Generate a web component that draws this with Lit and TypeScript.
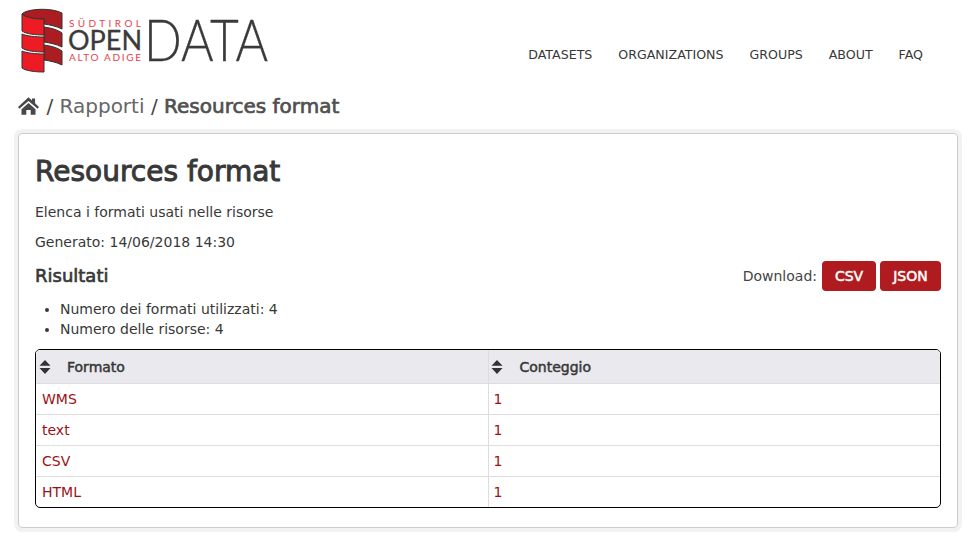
import {LitElement, html, css} from "lit";
import {customElement} from "lit/decorators.js";

const NAV = ["DATASETS", "ORGANIZATIONS", "GROUPS", "ABOUT", "FAQ"];
const ROWS = ["WMS", "text", "CSV", "HTML"];

const sortIcon = html`
  <svg class="sort" viewBox="0 0 12 14" width="12" height="14">
    <path d="M6 0 L11.5 5.8 H0.5 Z M0.5 8 H11.5 L6 14 Z" fill="#333"></path>
  </svg>
`;

@customElement("app-root")
export class AppRoot extends LitElement {
  static styles = css`
    :host {
      display: block;
      width: 979px;
      height: 547px;
      overflow: hidden;
      background: #fff;
      color: #383838;
      font-family: "DejaVu Sans", sans-serif;
      font-size: 14px;
      line-height: 20px;
    }
    header {
      height: 82px;
      display: flex;
      justify-content: space-between;
      padding: 0 56px 0 18px;
    }
    .logo {
      display: block;
      margin-top: 5px;
    }
    .logo text {
      font-family: Lato, sans-serif;
    }
    .logo .dark {
      stroke: #3a3a3a;
      stroke-width: 0.3px;
    }
    nav {
      display: flex;
      gap: 26px;
      padding-top: 45px;
      font-size: 12.6px;
    }
    nav a {
      color: #383838;
      text-decoration: none;
    }
    .crumbs {
      display: flex;
      align-items: center;
      gap: 6.4px;
      height: 36px;
      margin: 6px 0 9px 18px;
      color: #444;
      font-size: 20px;
    }
    .crumbs svg {
      margin-right: 1px;
    }
    .crumbs a {
      color: #666;
      text-decoration: none;
    }
    .crumbs b {
      color: #505050;
      font-weight: 400;
      -webkit-text-stroke: 0.7px currentColor;
    }
    .card {
      margin: 0 21px 0 18px;
      height: 395px;
      box-sizing: border-box;
      padding: 17px 16px;
      border: 1px solid #ccc;
      border-radius: 4px;
      box-shadow: 0 0 0 4px rgba(0, 0, 0, 0.05);
    }
    h1 {
      margin: 1px 0 -1px;
      font-size: 28px;
      line-height: 40px;
      font-weight: 400;
      -webkit-text-stroke: 0.95px currentColor;
    }
    p {
      margin: 12px 0 0;
      line-height: 18px;
    }
    .results {
      display: flex;
      justify-content: space-between;
      align-items: center;
      margin-top: 10px;
    }
    h2 {
      margin: 0;
      font-size: 18px;
      line-height: 30px;
      font-weight: 400;
      -webkit-text-stroke: 0.65px currentColor;
    }
    .download {
      display: flex;
      align-items: center;
      gap: 4px;
      color: #444;
    }
    .btn {
      width: 54px;
      height: 30px;
      box-sizing: border-box;
      text-align: center;
      line-height: 30px;
      background: #b01b1f;
      color: #fff;
      border-radius: 4px;
      text-decoration: none;
      -webkit-text-stroke: 0.5px currentColor;
    }
    .btn.first {
      margin-left: 1px;
    }
    .btn.wide {
      width: 61px;
    }
    ul {
      margin: 8px 0 10px;
      padding-left: 25px;
    }
    .table-wrap {
      border: 1px solid #000;
      border-radius: 5px;
      overflow: hidden;
    }
    table {
      width: 100%;
      border-collapse: collapse;
      table-layout: fixed;
    }
    th {
      height: 32px;
      padding: 1px 3px 0;
      background: #e9e9ee;
      text-align: left;
      font-weight: 400;
      border-bottom: 1px solid #ddd;
      -webkit-text-stroke: 0.5px currentColor;
    }
    th div {
      display: flex;
      align-items: center;
      gap: 16px;
    }
    th + th div {
      gap: 17px;
    }
    td {
      height: 30px;
      padding: 0 6px;
      border-top: 1px solid #ddd;
    }
    tr:first-child td {
      border-top: none;
    }
    td a {
      color: #9b1116;
      text-decoration: none;
    }
    th + th,
    td + td {
      border-left: 1px solid #ddd;
    }
    th + th {
      padding-left: 2px;
    }
    td + td {
      padding-left: 5px;
    }
    .sort {
      display: block;
      flex: none;
    }
  `;

  render() {
    return html`
      <header>
        <svg class="logo" width="280" height="75" viewBox="18 5 280 75">
          <g stroke="#333" stroke-width="1">
            <path d="M22 14 C26 9 50 7 62 13 V29 C56 26 50 25 44 24 V19 C36 19 26 18 22 14 Z" fill="#ac1d22"></path>
            <path d="M44 27 C52 28 58 30 62 33 V47 C56 44 50 43 44 42 Z" fill="#ac1d22"></path>
            <path d="M44 45 C52 46 58 48 62 51 V65 C56 62 50 61 44 60 Z" fill="#ac1d22"></path>
            <path d="M22 14 C26 18 36 19 44 19 V35 C36 35 26 34 22 31 Z" fill="#ed1c24"></path>
            <path d="M22 34 C26 36 36 37 44 37 V52 C36 52 26 51 22 48 Z" fill="#ed1c24"></path>
            <path d="M22 51 C26 53 36 54 44 54 V72 C36 72 26 71 22 68 Z" fill="#ed1c24"></path>
          </g>
          <text x="69" y="27" font-size="10" fill="#e8414a" textLength="72">SÜDTIROL</text>
          <text class="dark" x="68" y="50" font-size="26" fill="#3a3a3a" textLength="74" lengthAdjust="spacingAndGlyphs">OPEN</text>
          <text x="69" y="61" font-size="10" fill="#e8414a" textLength="72">ALTO ADIGE</text>
          <text class="dark" x="144" y="61" font-size="58" font-weight="300" fill="#3a3a3a" textLength="124" lengthAdjust="spacingAndGlyphs">DATA</text>
        </svg>
        <nav>${NAV.map((n) => html`<a href="#">${n}</a>`)}</nav>
      </header>
      <div class="crumbs">
        <svg viewBox="0 0 24 20" width="21" height="18">
          <path d="M12 0 L16 3.6 V1.5 H19.5 V6.8 L24 11 L22.4 13 L12 4.4 L1.6 13 L0 11 Z M4 13.6 L12 6.6 L20 13.6 V20 H14.5 V14.5 H9.5 V20 H4 Z" fill="#484848"></path>
        </svg>
        <span>/</span><a href="#">Rapporti</a><span>/</span><b>Resources format</b>
      </div>
      <section class="card">
        <h1>Resources format</h1>
        <p>Elenca i formati usati nelle risorse</p>
        <p>Generato: 14/06/2018 14:30</p>
        <div class="results">
          <h2>Risultati</h2>
          <div class="download">
            <span>Download:</span>
            <a class="btn first" href="#">CSV</a>
            <a class="btn wide" href="#">JSON</a>
          </div>
        </div>
        <ul>
          <li>Numero dei formati utilizzati: 4</li>
          <li>Numero delle risorse: 4</li>
        </ul>
        <div class="table-wrap">
          <table>
            <thead>
              <tr>
                <th><div>${sortIcon}Formato</div></th>
                <th><div>${sortIcon}Conteggio</div></th>
              </tr>
            </thead>
            <tbody>
              ${ROWS.map(
                (r) => html`<tr><td><a href="#">${r}</a></td><td><a href="#">1</a></td></tr>`
              )}
            </tbody>
          </table>
        </div>
      </section>
    `;
  }
}
